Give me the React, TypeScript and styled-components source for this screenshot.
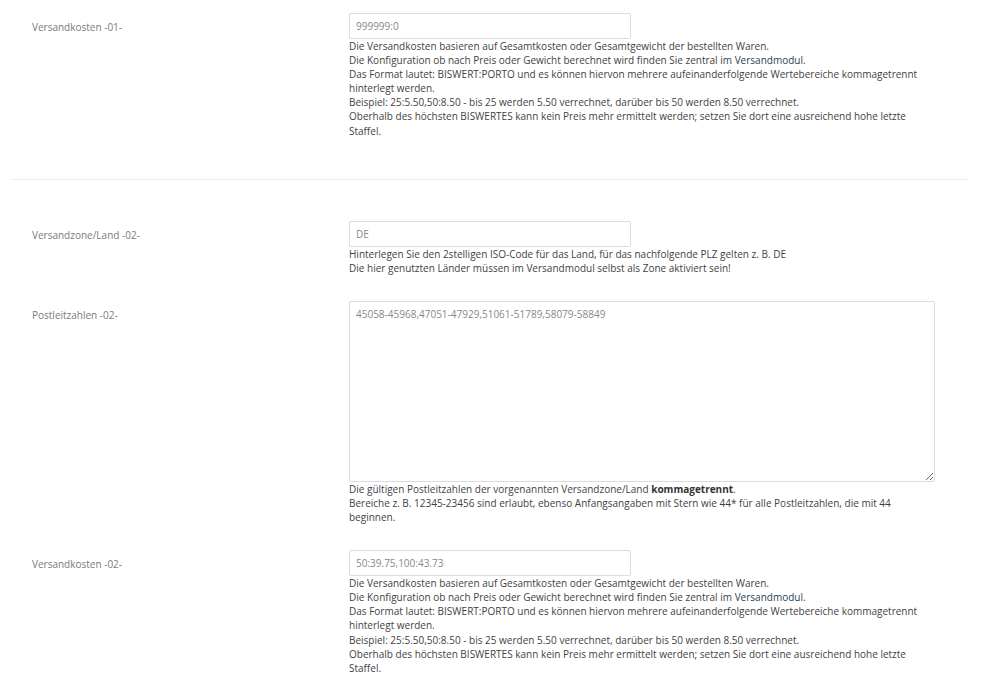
import * as React from 'react';
import styled, { createGlobalStyle } from 'styled-components';

const GlobalStyle = createGlobalStyle`
  html, body {
    margin: 0;
    padding: 0;
    background: #fff;
  }
  body {
    font-family: 'Open Sans', 'Noto Sans', sans-serif;
    color: #444;
  }
`;

const Page = styled.div`
  width: 1000px;
  padding: 0 32px 0 12px;
  box-sizing: border-box;
`;

const Section = styled.div<{ $top: number; $bottom: number }>`
  display: flex;
  flex-direction: column;
  gap: 26px;
  padding: ${p => p.$top}px 0 ${p => p.$bottom}px;
`;

const Divider = styled.hr`
  margin: 0;
  border: 0;
  border-top: 1px solid #ececec;
`;

const Row = styled.div`
  display: grid;
  grid-template-columns: 337px 586px;
  align-items: start;
`;

const Label = styled.div`
  padding: 7px 0 0 20px;
  font-size: 10px;
  line-height: 14px;
  color: #7a7a7a;
`;

const Field = styled.div`
  display: flex;
  flex-direction: column;
`;

const Input = styled.input`
  width: 282px;
  height: 26px;
  box-sizing: border-box;
  border: 1px solid #dcdcdc;
  border-radius: 2px;
  padding: 0 6px;
  font-family: inherit;
  font-size: 10px;
  color: #888;
  background: #fff;
  outline: none;
`;

const TextArea = styled.textarea`
  width: 586px;
  height: 181px;
  box-sizing: border-box;
  border: 1px solid #dcdcdc;
  border-radius: 2px;
  padding: 5px 6px;
  font-family: inherit;
  font-size: 10px;
  line-height: 14px;
  color: #888;
  background: #fff;
  outline: none;
  resize: vertical;
  display: block;
`;

const Help = styled.div`
  width: 586px;
  font-size: 10px;
  line-height: 14.1px;
  color: #3f3f3f;

  a {
    color: #1f3f4f;
    text-decoration: none;
  }
  b {
    font-weight: 700;
    color: #333;
  }
`;

function KostenHelp() {
  return (
    <Help>
      Die Versandkosten basieren auf Gesamtkosten oder Gesamtgewicht der bestellten Waren.
      <br />
      Die Konfiguration ob nach Preis oder Gewicht berechnet wird finden Sie zentral im{' '}
      <a href="#">Versandmodul</a>.
      <br />
      Das Format lautet: BISWERT:PORTO und es können hiervon mehrere aufeinanderfolgende
      Wertebereiche kommagetrennt hinterlegt werden.
      <br />
      Beispiel: 25:5.50,50:8.50 - bis 25 werden 5.50 verrechnet, darüber bis 50 werden 8.50
      verrechnet.
      <br />
      Oberhalb des höchsten BISWERTES kann kein Preis mehr ermittelt werden; setzen Sie dort eine
      ausreichend hohe letzte Staffel.
    </Help>
  );
}

export default function App() {
  return (
    <Page>
      <GlobalStyle />
      <Section $top={13} $bottom={41}>
        <Row>
          <Label>Versandkosten -01-</Label>
          <Field>
            <Input defaultValue="999999:0" />
            <KostenHelp />
          </Field>
        </Row>
      </Section>
      <Divider />
      <Section $top={41} $bottom={20}>
        <Row>
          <Label>Versandzone/Land -02-</Label>
          <Field>
            <Input defaultValue="DE" />
            <Help>
              Hinterlegen Sie den 2stelligen ISO-Code für das Land, für das nachfolgende PLZ gelten
              z. B. DE
              <br />
              Die hier genutzten Länder müssen im Versandmodul selbst als Zone aktiviert sein!
            </Help>
          </Field>
        </Row>
        <Row>
          <Label>Postleitzahlen -02-</Label>
          <Field>
            <TextArea defaultValue="45058-45968,47051-47929,51061-51789,58079-58849" />
            <Help>
              Die gültigen Postleitzahlen der vorgenannten Versandzone/Land <b>kommagetrennt</b>.
              <br />
              Bereiche z. B. 12345-23456 sind erlaubt, ebenso Anfangsangaben mit Stern wie 44* für
              alle Postleitzahlen, die mit 44 beginnen.
            </Help>
          </Field>
        </Row>
        <Row>
          <Label>Versandkosten -02-</Label>
          <Field>
            <Input defaultValue="50:39.75,100:43.73" />
            <KostenHelp />
          </Field>
        </Row>
      </Section>
    </Page>
  );
}
